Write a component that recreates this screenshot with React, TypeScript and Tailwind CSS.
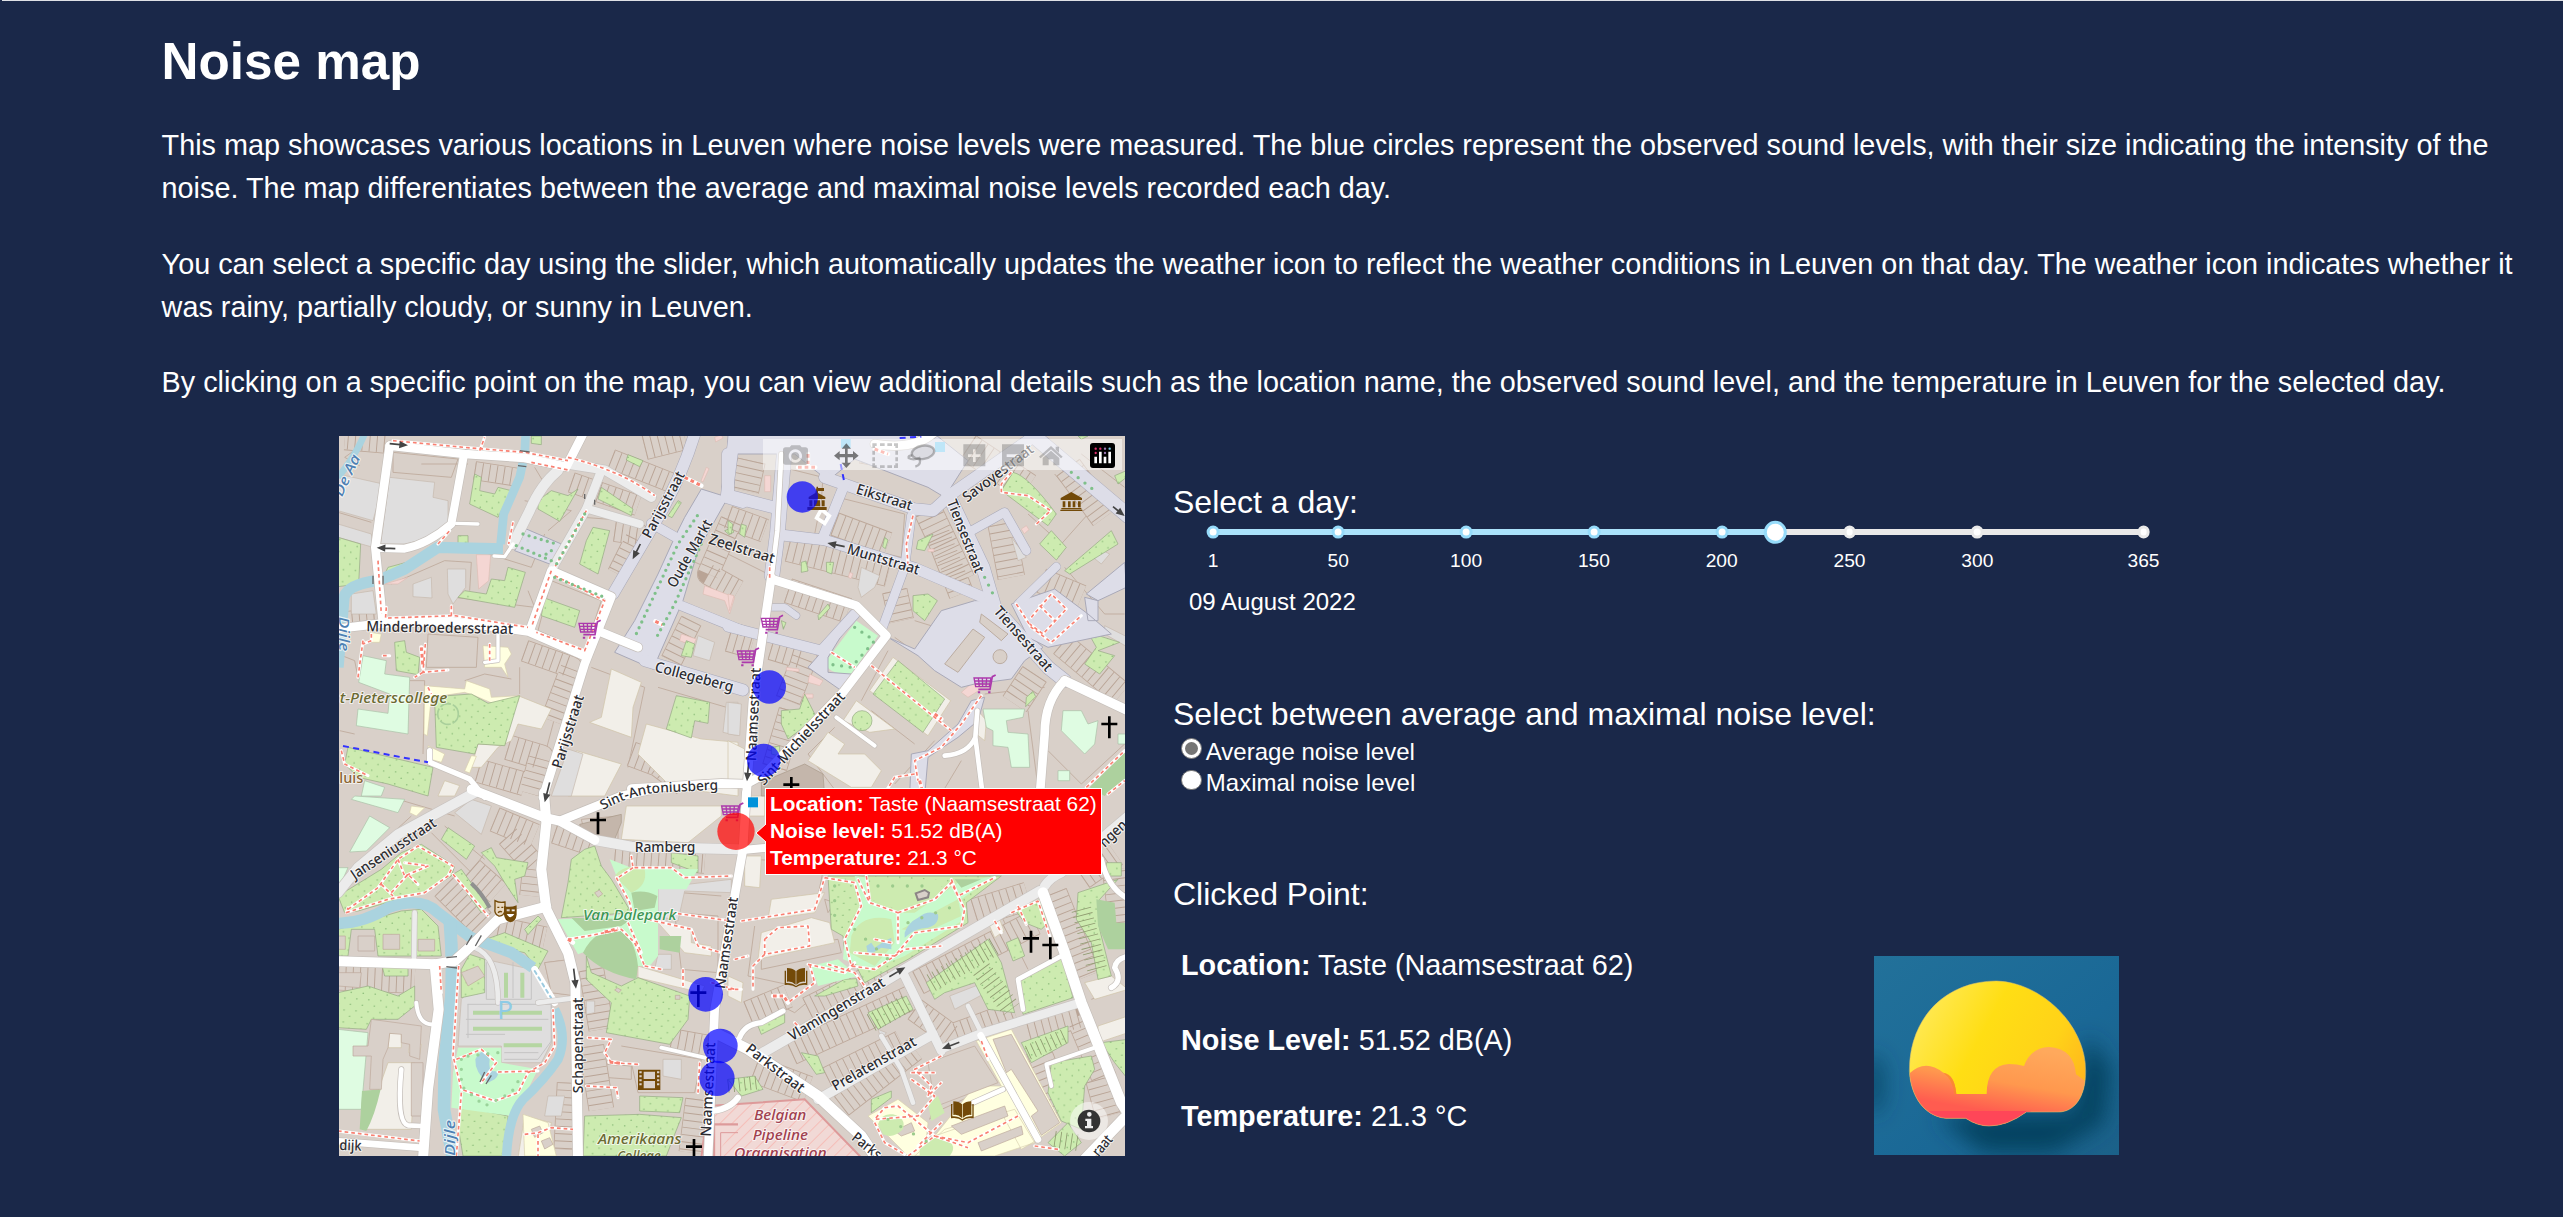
import React from "react";

type Quad = "A" | "B" | "C" | "D";
const OFFSET: Record<Quad, [number, number]> = { A: [-3, -6], B: [1167, -6], C: [-3, 1080], D: [1167, 1080] };
type Area = [Quad, string];
type Line = [Quad, number, string];

const at = (q: Quad) => `translate(${OFFSET[q][0]} ${OFFSET[q][1]})`;

const Areas = ({ items, fill, stroke = "none", sw = 2 }: { items: Area[]; fill: string; stroke?: string; sw?: number }) => (
  <g fill={fill} stroke={stroke} strokeWidth={sw}>
    {items.map(([q, d], i) => (
      <path key={i} d={d} transform={at(q)} />
    ))}
  </g>
);

const Lines = ({ items, color, grow = 0, dash, cap = "round" }: { items: Line[]; color: string; grow?: number; dash?: string; cap?: "round" | "butt" }) => (
  <g fill="none" stroke={color} strokeLinejoin="round" strokeLinecap={cap} strokeDasharray={dash}>
    {items.map(([q, w, d], i) => (
      <path key={i} d={d} strokeWidth={w + grow} transform={at(q)} />
    ))}
  </g>
);

const land: Area[] = [
  ["A", "M540 785 L640 825 L610 885 L540 870 L520 920 L480 940 L430 1000 L400 1000 L420 930 L500 935Z"],
  ["A", "M820 705 L910 745 L885 820 L880 910 L755 865 L790 850Z"],
  ["A", "M925 870 L1090 915 L1200 925 L1200 1086 L1000 1060 L900 960Z"],
  ["A", "M715 950 L850 990 L800 1086 L690 1086Z"],
  ["A", "M320 1040 L365 1055 L350 1086 L300 1086Z"],
  ["B", "M0 920 L50 945 L50 1040 L0 1040Z"],
  ["B", "M495 670 L668 800 L600 905 L425 770Z"],
  ["B", "M385 800 L500 885 L425 895 L345 860Z"],
  ["B", "M300 895 L350 930 L330 960 L410 960 L460 1010 L430 1060 L370 1060 L240 980Z"],
  ["B", "M750 830 L775 860 L770 920 L745 900Z"],
  ["C", "M865 30 L1150 30 L1150 60 L1050 140 L850 130Z"],
  ["C", "M150 800 L230 800 L220 1000 L80 1000Z"],
  ["C", "M155 712 L190 712 L190 755 L150 755Z M215 740 L250 745 L245 775 L212 770Z"],
  ["C", "M900 510 L1100 570 L1090 590 L900 545Z"],
  ["C", "M960 380 L1060 400 L1060 440 L1120 450 L1120 480 L1040 470Z"],
  ["C", "M560 960 L640 980 L620 1086 L540 1086Z"],
  ["D", "M50 180 L100 180 L95 275 L50 270Z"],
  ["D", "M130 310 L290 290 L260 350 L120 370Z"],
  ["D", "M100 410 L250 365 L305 380 L320 440 L90 490Z"],
  ["D", "M1070 560 L1150 540 L1200 580 L1100 610Z M1110 690 L1200 660 L1200 710 L1110 740Z"],
  ["D", "M60 0 H110 V60 H55Z"],
  ["D", "M0 540 L45 560 L40 620 L0 600Z M785 390 L815 370 L828 405 L800 425Z"],
];
const pale: Area[] = [
  ["A", "M155 130 L290 145 L285 190 L330 200 L330 265 Q270 320 200 330 L128 330Z"],
  ["A", "M0 120 L135 150 L105 260 L0 230Z"],
  ["A", "M0 270 L100 300 L105 340 L0 310Z"],
  ["A", "M40 480 L105 470 L115 540 L40 540Z"],
  ["A", "M225 450 L280 430 L282 492 L225 488Z M328 405 L383 405 L383 460 L345 510 L330 480Z"],
  ["A", "M1080 605 L1130 625 L1115 680 L1065 665Z M1165 805 L1200 805 L1200 905 L1155 895Z"],
  ["A", "M690 945 L735 960 L700 1086 L640 1086Z"],
  ["B", "M400 400 L455 425 L440 460 L400 490 L390 460Z M1105 340 L1145 360 L1120 390 L1095 370Z"],
  ["B", "M0 805 L40 810 L35 905 L0 900Z M850 310 L895 370 L870 380Z M1130 575 L1200 610 L1200 640 L1130 600Z"],
  ["C", "M350 50 L400 10 L460 30 L430 115Z"],
  ["C", "M370 610 L420 560 L440 490 L580 520 L640 600 L640 740 L610 800 L490 800 L490 750 L360 750Z"],
  ["C", "M960 275 L1180 250 L1180 290 L1040 285 L1020 375 L960 360Z M975 790 H1030 V850 L975 840Z M745 615 H770 V650 L745 655Z"],
  ["C", "M960 475 L1000 475 L1000 520 L950 520Z M630 900 L680 900 L670 960 L620 960Z"],
  ["D", "M665 600 L755 565 L765 595 L680 640Z M450 700 L475 710 L460 730Z"],
];
const pink: Area[] = [
  ["A", "M415 362 L458 362 L452 440 L422 465Z M1100 455 L1190 490 L1175 540 L1160 500 L1095 480Z M1030 600 L1075 615 L1065 635 L1025 620Z M335 520 h12 v22 h-12Z"],
  ["A", "M1130 10 l20 -8 l5 10 l-22 12Z M140 450 L210 430 L180 450Z M1105 100 l8 4 l-18 40 l-6 -3Z"],
  ["B", "M110 125 h18 v48 h-18Z M700 775 L740 740 L760 765 L720 790Z M245 720 L285 740 L275 755 L240 745Z M0 480 L18 485 L5 530Z M880 285 l15 -10 l8 12 l-14 12Z M690 525 l15 -10 l6 10 l-20 18Z M600 345 h18 v8 h-18Z M175 700 l38 5 v8 l-38 -4Z M225 780 h30 v12 h-30Z M365 415 l10 4 l-6 15 l-8 -4Z"],
];
const gardens: Area[] = [
  ["A", "M0 310 L68 330 L62 450 L0 458Z"],
  ["A", "M410 120 L430 130 L425 170 L470 180 L480 160 L520 170 L480 250 L395 210Z"],
  ["A", "M600 200 L640 170 L690 185 L720 165 L665 262 L600 225Z"],
  ["A", "M510 400 L562 415 L530 520 L360 490 L380 470 L445 480 L460 435 L500 440Z"],
  ["A", "M765 280 L815 290 L780 420 L725 390 L745 320Z"],
  ["A", "M620 492 L725 530 L710 580 L610 545Z"],
  ["A", "M870 62 L915 80 L905 98 L865 78Z M790 160 L885 225 L880 245 L780 195Z M580 6 H610 V32 L580 28Z"],
  ["A", "M170 625 L200 620 L205 655 L245 670 L240 722 L175 710Z"],
  ["A", "M330 785 L400 780 L450 808 L545 785 L500 935 L420 930 L410 960 L295 940 L290 800Z"],
  ["A", "M30 940 L285 1000 L270 1086 L150 1050 L60 1030 L20 990Z"],
  ["A", "M1015 785 L1115 805 L1110 868 L1070 860 L1060 912 L985 885Z"],
  ["A", "M1045 620 L1070 630 L1060 670 L1030 665Z M150 400 L205 385 L190 415 L140 420Z M360 305 h30 v25 h-30Z M1160 290 l20 -8 l8 12 l-15 8Z M1020 200 l10 6 l-28 45 l-12 -6Z"],
  ["B", "M855 115 Q900 125 985 240 L960 275 L880 215 L820 170Z"],
  ["B", "M970 290 L1015 340 L985 378 L935 330Z M1010 410 L1150 290 L1170 330 L1025 420Z M1160 125 L1195 110 L1195 130 L1170 150Z"],
  ["B", "M555 485 L600 480 L628 500 L590 560 L555 530Z M570 320 L615 300 L590 350 L565 345Z"],
  ["B", "M510 680 L650 795 L585 895 L435 780Z"],
  ["B", "M160 830 L215 825 L230 780 L265 850 L240 870 L180 915 L160 870Z M372 860 a30 30 0 1 0 60 0 a30 30 0 1 0 -60 0"],
  ["B", "M40 270 L55 275 L50 310 L35 300Z M220 385 l14 -4 l6 30 l-20 4Z M295 385 h22 l-6 35 l-15 -6Z M0 260 l14 10 l-4 30 l-10 -4Z M270 545 l30 -35 l6 12 l-34 36Z M470 310 l10 8 l-8 26 l-8 -6Z M160 560 l14 6 l-8 20Z M130 940 l25 -4 v30 l-25 -6Z"],
  ["B", "M1080 595 L1175 625 L1110 650 L1160 665 L1115 720 L1070 690 L1105 640Z M895 790 l20 -18 l8 16 l-30 30Z M1050 6 h30 l-20 10Z"],
  ["C", "M330 95 L410 150 L385 190 L310 130Z"],
  ["C", "M0 300 L130 220 L190 170 L250 145 L350 210 L340 240 L260 290 L180 310 L60 345 L20 350Z"],
  ["C", "M0 400 L190 345 L250 340 L300 390 L310 480 L120 480 L110 400 L40 400 L30 480 L0 480Z"],
  ["C", "M345 235 L370 220 L450 330 L430 350Z M430 170 L460 155 L475 185 L570 200 L560 240 L530 250 L540 320 L500 260 L470 210Z"],
  ["C", "M770 150 L790 210 L820 250 L880 350 L670 365 L690 260 L700 190 L740 160Z"],
  ["C", "M745 480 L760 530 L850 570 L900 545 L1055 600 L1050 670 L995 745 L805 710 L820 620 L745 550Z"],
  ["C", "M0 590 L90 570 L180 600 L230 570 L230 630 L180 670 L100 670 L85 700 L0 695Z"],
  ["C", "M415 440 L500 410 L630 465 L600 520 L560 470Z M395 475 L440 490 L440 590 L370 605 L370 520Z M560 400 l40 -40 l10 10 l-40 46Z"],
  ["C", "M905 900 L1035 905 L1025 950 L905 945Z M740 960 L905 955 L1030 965 L1010 1015 L985 1080 L735 1080Z"],
  ["C", "M365 930 L510 960 L500 1080 L375 1080 L360 990Z M130 500 L210 505 L210 540 L140 540Z M1000 170 L1080 180 V230 L1000 200Z"],
  ["D", "M300 240 L820 240 L715 320 L720 380 L540 490 L410 560 L380 500 L350 470 L345 420 L310 400Z"],
  ["D", "M870 560 L1000 480 L1035 605 L885 655Z M835 440 L870 425 L890 480 L855 495Z M860 340 L935 310 L960 380 L940 400 L890 380Z"],
  ["D", "M1050 290 L1170 250 L1115 310 L1115 400 L1150 540 L1110 550 L1090 440 L1045 370Z M1135 200 h45 v40 h-45Z"],
  ["D", "M595 560 L780 430 L820 500 L860 650 L780 640 L740 560 L650 590 L620 610Z"],
  ["D", "M420 650 L535 600 L555 640 L450 700Z M90 690 L170 655 L170 680 L100 715Z M220 770 L270 780 L290 830 L265 835Z"],
  ["D", "M880 740 L1020 690 L1020 740 L910 800Z M970 800 L1090 780 L1100 820 L1070 870 L1060 1000 L1000 975 L960 890Z M1120 740 L1200 730 V850 L1160 800Z"],
  ["D", "M430 910 L490 885 L490 905 L430 950Z M0 850 L80 840 L105 880 L40 900Z M0 940 L50 930 L50 950 L0 960Z M960 1040 L1020 980 L1060 1040 L1010 1080Z"],
  ["D", "M260 600 L350 550 L385 548 L390 570 L290 600Z"],
];
const mint: Area[] = [
  ["A", "M75 665 L145 680 L140 720 L215 730 L210 900 L55 875 L60 825 L150 838 L155 780 L62 745Z"],
  ["A", "M80 1040 L140 1060 L130 1086 L70 1086Z"],
  ["B", "M765 825 L890 825 L885 850 L835 860 L840 895 L900 900 L905 1000 L850 1000 L840 940 L795 935 L795 890 L775 880Z"],
  ["B", "M1005 830 L1060 830 L1080 870 L1110 860 L1100 930 L1070 960 L1000 890Z M990 1010 h35 v30 h-35Z M1170 900 h25 v30 h-25Z"],
  ["C", "M50 0 L200 10 L180 50 L40 10Z M95 60 L155 95 L85 165 L35 168Z M0 700 L90 710 L70 940 L0 940Z M0 215 L30 215 L10 260 L0 260Z"],
];
const parks: Area[] = [
  ["C", "M815 190 L880 215 L1080 220 L1045 280 L960 280 L960 480 L935 510 L890 510 L840 430 L720 475 L660 370 L780 365 L880 350Z"],
  ["C", "M360 755 L490 755 L490 800 L600 820 L560 900 L520 960 L340 935 L345 830Z"],
  ["D", "M380 240 L420 245 L420 310 L500 350 L560 350 L690 260 L800 240 L700 310 L710 370 L530 480 L430 520 L345 490 L350 420 L400 340Z"],
  ["D", "M250 510 L330 490 L390 540 L270 570Z"],
  ["B", "M385 560 L450 605 L370 720 Q290 720 295 680Z"],
];
const inPark: Area[] = [
  ["D", "M430 250 L660 250 L600 320 L520 345 L430 310Z M520 400 L690 310 L700 360 L590 410Z M370 420 Q400 350 490 370 L500 440 L440 510 L365 470Z"],
  ["C", "M830 240 Q860 200 920 220 Q930 270 880 290 Q850 260 830 240Z"],
];
const forest: Area[] = [
  ["C", "M735 470 Q770 400 840 400 Q890 420 900 510 L895 550 Q790 530 735 470Z M700 365 L880 370 L850 390 L740 405Z M880 290 Q920 280 958 300 L950 335 L890 345Z M965 420 L1030 420 L1025 470 L965 460Z M72 885 L128 880 Q110 960 85 1005 L65 1000Z"],
  ["D", "M1105 310 L1160 320 L1165 380 H1200 V460 H1140 L1110 390Z M680 250 h80 l-60 25Z"],
  ["B", "M1085 1060 L1195 950 L1195 1030 L1130 1086Z"],
];
const yellow: Area[] = [
  ["A", "M260 755 L380 765 L385 740 L455 765 L460 790 L545 785 L540 805 L480 815 L410 785 L380 775 L280 790 L268 905 L258 900Z M435 635 L510 640 L520 660 L500 690 L510 730 L490 700 L440 700Z M270 935 L320 960 L310 985 L275 975Z M400 965 l15 2 l-20 50 l-15 -6Z M95 595 L130 600 L125 625 L100 625Z"],
  ["C", "M555 955 L630 980 L640 1020 L655 1080 L560 1080Z M220 30 L260 35 L235 60 L215 50Z"],
  ["D", "M745 735 L850 700 L1000 980 L930 1030 L880 1060 L820 950 L620 1020 L740 870 L820 870Z M420 960 L510 910 L600 980 L590 1080 L540 1080Z M650 1000 L860 940 L920 1040 L800 1080 L560 1080Z"],
];
const yellowBuildings: Area[] = [
  ["D", "M600 800 L740 750 L810 860 L640 925 L605 970 L620 920Z M670 990 L830 930 L840 960 L700 1015Z M750 1040 L880 990 L885 1015 L760 1065Z M795 730 L850 715 L995 980 L940 1018 L910 960 L930 945 L850 820 L835 830Z M500 1005 L550 980 L560 1005 L520 1020Z"],
];
const shrubs: Area[] = [
  ["D", "M450 985 q10 -35 45 -30 q40 10 30 45 q-30 30 -60 15Z M575 1060 q25 -50 80 -30 q35 20 10 50 h-90Z M600 920 l30 -20 l20 50 l-40 25Z"],
];
const water: Line[] = [
  ["A", 26, "M563 0 L560 60 L545 130 L497 240 L488 330"],
  ["A", 34, "M495 345 L300 340 L200 405 L120 440 Q30 450 18 490 L0 700"],
  ["A", 20, "M80 0 Q50 70 0 130"],
  ["C", 34, "M0 382 Q80 380 150 335 Q250 300 300 350 L400 425 L520 470 L585 515"],
  ["C", 38, "M335 370 Q345 480 340 600 L320 800 L318 940 L345 1090"],
  ["C", 28, "M650 640 Q690 720 660 790 Q620 850 555 910 Q510 960 505 1090"],
];
const ponds: Area[] = [
  ["C", "M412 790 Q435 745 455 790 Q450 830 470 825 Q490 830 470 850 L450 860 Q410 830 412 790Z"],
  ["D", "M530 410 Q540 380 570 365 Q600 340 630 355 Q635 385 600 395 Q560 395 530 425Z M415 450 L430 440 L440 455 L470 435 L490 425 L490 460 L460 455 L435 470 L420 475Z"],
];
const squares: Area[] = [
  ["A", "M1090 165 L1170 190 L1080 350 L1035 500 L945 705 L830 655 L890 560 L960 420 L1010 310 L1040 250Z"],
  ["A", "M565 285 L670 330 L640 392 L530 350Z"],
  ["B", "M0 0 L620 0 L720 80 L650 190 L600 160 L380 75 L300 140 L200 60 L0 60Z"],
  ["B", "M640 530 L740 500 L790 500 L945 640 L890 680 L850 735 L740 750 L700 760 L620 710 L570 665 L480 610 L560 645Z"],
  ["B", "M850 510 L980 465 L1080 540 L1150 600 L960 640 L900 610Z M1075 480 L1190 385 L1195 460 L1110 500Z M1070 490 L1110 500 L1110 560 L1080 560Z"],
  ["B", "M240 700 L380 540 L300 670 L300 715 L370 720 L340 770Z"],
  ["B", "M770 790 L750 860 L690 910 L600 970 L590 1086 L545 1086 L550 960 L600 950 L690 870 L730 800Z"],
];
const pedestrian: Line[] = [
  ["A", 34, "M1070 0 Q1030 130 960 250 L825 480"],
  ["A", 34, "M1190 0 L1165 190 L1215 205"],
  ["A", 28, "M1030 515 L1215 590"],
  ["A", 28, "M940 268 L1010 308"],
  ["A", 34, "M920 680 L1215 768"],
  ["B", 36, "M0 60 L0 185 L145 222"],
  ["B", 44, "M170 40 L148 300 L132 425"],
  ["B", 32, "M150 302 L290 318 L560 402 L770 492"],
  ["B", 34, "M290 130 L560 225 L615 230 L670 180 L900 20"],
  ["B", 30, "M350 150 L285 310"],
  ["B", 40, "M660 180 L765 400 L800 520 L960 700 L1010 740"],
  ["B", 26, "M550 245 L530 400 L460 590"],
  ["B", 26, "M735 288 L830 235 L895 350"],
  ["B", 24, "M870 510 L985 398"],
  ["B", 30, "M0 578 L280 650 L380 540"],
  ["B", 20, "M130 520 L170 520 L205 545"],
  ["B", 44, "M910 0 L1200 245"],
];
const grey: Line[] = [
  ["A", 30, "M660 110 Q610 150 575 230 L525 330"],
  ["A", 26, "M645 400 L745 225 L790 110"],
  ["A", 24, "M750 225 L905 270"],
  ["A", 28, "M700 92 L800 108 L940 190"],
  ["C", 30, "M0 290 L60 215 L180 115 L410 -10"],
  ["C", 30, "M770 132 L880 152 L1200 160"],
  ["C", 14, "M230 350 L228 490"],
  ["C", 14, "M410 455 Q480 480 480 620 M600 620 L720 605"],
  ["D", 30, "M105 770 L330 640 L530 520 L935 285"],
  ["D", 28, "M950 270 Q965 245 1000 230 L1200 60"],
  ["D", 26, "M525 530 L640 765"],
  ["D", 26, "M650 755 L760 712 L1050 622"],
  ["D", 28, "M615 715 L270 910"],
  ["D", 14, "M460 720 L520 820 L555 920 M720 630 L755 700"],
];
const white: Line[] = [
  ["A", 26, "M155 35 L112 340 L135 570"],
  ["A", 26, "M155 35 L380 60 L560 72 L685 98 L740 -10"],
  ["A", 24, "M378 62 L340 270 Q270 330 200 344 L118 342"],
  ["A", 26, "M-10 585 L135 568 L340 562 L570 592 L745 668"],
  ["A", 26, "M575 590 L640 410 L820 488 L740 690 L615 1090"],
  ["A", 26, "M790 595 L900 640"],
  ["A", 10, "M480 600 L480 680 L440 685 M355 268 L420 270 M525 330 L500 368 L468 366"],
  ["A", 16, "M275 950 L275 985 L395 1035 L440 1090"],
  ["B", 26, "M130 430 L75 800 L55 1090"],
  ["B", 14, "M160 60 L148 290 L132 420"],
  ["B", 26, "M130 435 L385 515 L475 605 L345 775 L110 1020 L55 1050 L-20 1048 L-290 1064"],
  ["B", 26, "M440 30 Q560 50 620 -6"],
  ["B", 28, "M1010 740 L1200 830"],
  ["B", 26, "M1010 740 Q950 800 950 900 L935 1090"],
  ["B", 14, "M748 830 L742 910 L765 1090 M742 910 Q720 960 650 965"],
  ["B", 12, "M325 850 L440 935"],
  ["C", 28, "M400 -20 L620 65 L665 75 L770 132"],
  ["C", 30, "M618 -10 L625 80 L610 220 L625 340 L690 470 L712 560 L720 1090"],
  ["C", 26, "M665 75 L850 0 L960 -24"],
  ["C", 30, "M625 332 L480 370 L410 440 L350 495 L290 505 L-10 495"],
  ["C", 30, "M290 505 L302 640 L270 880 L255 1090"],
  ["C", 12, "M235 620 Q240 690 290 685 M970 755 L1100 785"],
  ["C", 14, "M190 820 Q175 980 210 988 L250 990"],
  ["C", 20, "M-10 1035 L245 1055"],
  ["C", 18, "M1110 945 Q1170 945 1200 905"],
  ["D", 26, "M55 -10 L45 160 L20 300 L-40 640 L-60 1090"],
  ["D", 24, "M45 162 L120 155"],
  ["D", 32, "M-30 715 L60 760 L270 900 L400 1020 L450 1095"],
  ["D", 32, "M945 290 L1010 470 L1060 620 L1180 920 L1205 960"],
  ["D", 32, "M1190 965 L1070 1090"],
  ["D", 20, "M758 718 L930 1030"],
  ["D", 14, "M1000 480 L870 550 L885 640 M825 880 L735 920"],
  ["D", 12, "M970 870 L955 805 L1100 755"],
  ["D", 16, "M1120 190 Q1140 280 1205 310 M1150 575 Q1185 555 1160 515 Q1165 485 1205 480"],
  ["D", 16, "M35 725 Q50 685 100 680 L165 645"],
];
const terraces: Line[] = [
  ["A", 46, "M700 145 L900 215"], ["A", 44, "M820 75 L1010 150"], ["A", 60, "M920 40 L1040 10"], ["A", 50, "M830 290 L900 300 L840 420"],
  ["A", 50, "M1180 260 L1110 420 L1200 470"], ["A", 50, "M1060 560 L1000 680"], ["A", 50, "M560 650 L700 700 L640 860"], ["A", 56, "M420 1010 L560 1050"], ["A", 60, "M510 940 L610 970 L580 1080"], ["A", 60, "M880 960 L960 990 L1040 1050"], ["A", 40, "M410 110 L540 130"], ["A", 40, "M20 560 L110 552"], ["A", 40, "M140 30 L20 20"],
  ["B", 70, "M70 80 L50 170"], ["B", 60, "M180 345 L480 420"], ["B", 56, "M320 270 L480 330"], ["B", 70, "M600 230 L700 440"], ["B", 60, "M560 80 L400 50"], ["B", 60, "M630 300 L700 480"], ["B", 66, "M820 270 L850 430"], ["B", 70, "M720 40 L900 160"], ["B", 60, "M180 470 L360 530"], ["B", 60, "M500 470 L520 560"], ["B", 60, "M130 640 L230 670 L180 800"], ["B", 60, "M190 830 L140 1000"], ["B", 60, "M1000 630 L1180 780"], ["B", 70, "M920 720 L860 810"], ["B", 70, "M1020 100 L1130 250"], ["B", 60, "M940 440 L1060 490"], ["B", 56, "M0 250 L110 290"], ["B", 50, "M0 620 L70 640"],
  ["C", 60, "M470 70 L590 120"], ["C", 56, "M510 120 L590 210 L580 300"], ["C", 50, "M650 110 L770 150"], ["C", 50, "M830 180 L1100 200"], ["C", 60, "M400 220 L480 290"], ["C", 60, "M480 400 L620 430"], ["C", 60, "M0 545 L230 555"], ["C", 70, "M320 270 L430 380"], ["C", 60, "M760 520 L790 700"], ["C", 50, "M1000 730 L1110 750"], ["C", 50, "M690 860 L680 1060"], ["C", 60, "M1080 910 L1060 1070"], ["C", 60, "M760 750 L790 940"],
  ["D", 70, "M740 350 L900 300"], ["D", 60, "M570 560 L920 380"], ["D", 56, "M560 640 L670 720 L860 650"], ["D", 60, "M240 640 L480 520"], ["D", 60, "M190 770 L560 600"], ["D", 66, "M80 820 L240 880"], ["D", 56, "M340 930 L560 760"], ["D", 60, "M980 290 L1080 540"], ["D", 60, "M900 700 L1050 660 L1130 850"], ["D", 60, "M1180 380 L1160 220"], ["D", 60, "M930 760 L1010 960"], ["D", 60, "M1110 850 L1140 960"], ["D", 56, "M60 650 L180 600"], ["D", 60, "M300 850 L520 740"], ["D", 70, "M1060 240 L1160 170"],
];
const outlines: Area[] = [
  ["A", "M165 55 L360 75 L340 130 L165 115Z M0 235 L100 265 M65 95 L20 70 L90 20 M160 450 L320 380 L400 385 L395 470 M420 350 L580 400 L620 300 M570 470 L590 520 L350 490 M270 600 L420 610 L415 700 L265 700Z M0 660 L50 680 L60 730 M545 700 L545 780 M50 900 L5 890 M215 740 L260 740 L255 960 M380 740 L440 720 L520 735 M640 440 L790 500 L740 650 L600 590Z M735 250 L870 260 M690 700 L600 1040 M760 700 L920 760 L870 1000 M1060 380 L1200 440 M960 760 L1200 830 M630 290 L700 230 L560 200 M250 90 L390 90 M590 100 L620 150"],
  ["B", "M165 100 L285 130 L280 200 L260 300 L160 290Z M330 190 L530 240 L520 370 L310 320Z M560 560 L625 580 L570 660 L500 610 M480 650 L400 800 M620 920 L500 1050 M900 240 L1000 330 L1080 240 L980 120 M1060 60 L1190 160 M950 760 L770 780 M1010 400 L1130 540 L1190 540 M960 950 L1060 1050 L1190 930 M560 930 L430 830 M320 880 L240 960 L330 1080 M0 360 L120 420 L80 700 M700 980 L640 1080 M900 830 L930 1060"],
  ["C", "M180 10 L350 60 M100 170 L220 60 M320 90 L440 190 M280 110 L400 230 L440 170 M370 530 L420 510 L440 540 L390 570Z M620 500 L700 490 L720 600 L640 590Z M1030 290 L1150 300 M1010 350 L1140 360 L1140 530 L1030 520Z M745 800 L880 810 L880 850 L745 840 M850 750 L1090 790 L1070 890 L900 890 L880 800 M730 70 L840 60 L840 130 L740 110Z M700 650 L790 650 L810 700"],
  ["D", "M65 190 L290 200 L270 300 M80 390 L60 540 L200 570 M100 460 L330 430 L340 470 L100 520Z M610 920 L740 870 L750 890 L620 950Z M1090 610 L1200 570 M290 310 L320 320 L300 350Z M290 680 L340 740 L430 690 M120 610 L200 650 L260 600 M820 360 L900 520"],
];
const smallBuildings: Area[] = [
  ["C", "M60 420 h50 v45 h-50Z M135 415 h50 v45 h-50Z M240 430 h50 v35 h-50Z M370 530 L420 510 L440 540 L390 570Z M770 290 l14 -8 l10 12 l-14 10Z M580 1000 l25 -10 l10 20 l-25 14Z M610 1035 l25 -10 l10 20 l-25 14Z M620 500 L700 490 L715 600 L640 590Z M830 582 l8 -6 l12 6 l-8 8Z M1012 598 h14 v12 h-14Z M0 420 h22 v40 h-22Z M0 530 L70 530 L65 575 L0 570Z"],
  ["C", "M100 670 L250 690 L245 790 L215 780 L215 745 L190 740 L190 715 L155 712 L150 755 L135 790 L130 880 L95 880 L100 780 L45 780 L45 750 L90 750Z M220 800 h35 v160 h-35Z"],
  ["B", "M155 1070 h1 v1 h-1Z"],
];
const paths: Line[] = [
  ["A", 5, "M165 20 L400 42 L560 55 L690 80 M580 85 L690 108 M690 70 Q850 110 950 185 M425 50 L440 10"],
  ["A", 5, "M120 380 L130 540 M145 520 L142 560 M150 552 L350 545 L570 580 M640 410 L580 580 M650 425 L800 500 L740 650 L595 595 M300 330 L335 290"],
  ["A", 5, "M75 620 L60 730 M100 600 L100 620 L75 630 M262 630 L255 715 L330 708 M255 715 L230 730 M135 665 h20 M455 630 v50 M270 760 l10 20 M10 950 L20 990 L90 1025 M525 265 L512 330 M340 515 v30 M745 230 L690 330 L650 400"],
  ["A", 9, "M1040 130 L1090 155 M952 562 l22 10 M250 640 L255 700"],
  ["B", 5, "M555 245 L535 330 L540 390 M310 655 L380 700 M430 695 L620 850 L670 890 M850 115 L820 150 L820 175 L900 185 L968 230 L925 270"],
  ["B", 5, "M865 510 L910 580 L970 625 L1060 545 M910 550 L970 480 L1015 525 L945 600 L905 570 M935 515 L980 560 M760 785 L700 870 L640 940 L560 980 L570 1040 M560 1020 L500 1030 L475 1070 M125 400 v40 M1075 1060 L1190 950 M1140 1080 L1190 1040"],
  ["B", 9, "M440 45 L480 60 M210 100 L262 100 M240 60 v30 M620 840 l20 15 M575 1040 L585 1080"],
  ["C", 5, "M30 340 L120 275 L180 190 L240 150 L345 210 L330 240 L260 290 L150 310 L25 350 L30 335 M130 265 L165 300 M180 190 L200 240 L270 210 L200 200 M160 290 L210 235 L240 265 M345 235 L450 360"],
  ["C", 5, "M880 180 L885 215 L1000 215 L1040 245 L1180 240 M835 245 L875 320 L880 345 M885 215 L840 245 M690 430 L750 420 L850 400 L890 440 L920 510 M870 380 L910 470 M930 370 L1060 400 L1080 450 L1150 470 M1000 350 L1180 375 M920 510 L970 520"],
  ["C", 5, "M305 510 L310 590 M362 510 L345 780 L370 880 L470 915 L540 890 L570 830 L620 800 L650 750 L645 640 M355 790 L430 760 L475 800 L430 860 M480 828 L600 825 M370 890 L355 1080"],
  ["C", 5, "M0 1005 L245 1035 M560 1015 L600 1010 L640 995 L705 1000 M600 1015 V1080 M750 725 L820 730 L800 770 L820 800 L900 805 M745 870 L835 875 L840 905 M1085 800 L1080 890 M1120 560 L1190 580 M1035 520 V570 M265 110 L275 95"],
  ["C", 9, "M690 430 L705 440 M800 408 L840 398 M815 798 L850 802"],
  ["D", 5, "M40 375 L260 340 L290 245 M290 245 L380 260 L400 330 L350 430 L370 510 L440 520 L530 460 L640 450 M390 250 L425 320 L510 350 L510 440 M510 350 L620 310 L670 260 L710 340 L700 390 L560 410 L500 480 L380 470 M670 250 L690 300 L800 245 M415 240 L425 310 M440 430 L490 440"],
  ["D", 5, "M20 490 L60 480 M110 430 L150 395 L240 390 L245 450 L110 475Z M110 475 L75 510 L75 580 M245 505 L260 560 L180 620 M240 505 L350 530 L380 500 M300 505 L380 530 L410 570 M0 580 H40 M200 680 l10 10"],
  ["D", 5, "M850 350 L930 315 L965 420 M870 330 L895 385 M800 375 L820 410 M640 780 L560 820 L610 870 L600 900 L640 860 M550 830 L620 830 M550 850 L620 900 L570 960 L440 970 L470 935 L510 930 L620 1020 L720 1055 M760 735 L780 790 M870 960 L720 1040 L620 1020 L540 1080 M920 1050 L990 1060 M440 980 L470 1040 L530 1075 M640 980 L570 1050"],
  ["D", 9, "M135 600 L165 600 M170 605 L180 620"],
];
const house: Line[] = [
  ["D", 60, "M1060 340 L1110 530"], ["D", 56, "M610 560 L800 450"], ["D", 60, "M760 520 L850 640"], ["D", 56, "M430 680 L540 620"], ["D", 44, "M900 770 L1010 720"], ["D", 40, "M0 870 L90 860"], ["D", 50, "M980 1030 L1050 1040"],
];

const DARK = "#2c2c31";
type Label = [Quad, number, number, number, number, string, string?, boolean?];
const labels: Label[] = [
  ["A", 85, 592, 525, 600, "Minderbroedersstraat"],
  ["A", 937, 316, 1042, 122, "Parijsstraat"],
  ["A", 1012, 464, 1124, 267, "Oude Markt"],
  ["A", 1110, 328, 1305, 388, "Zeelstraat"],
  ["A", 948, 712, 1182, 774, "Collegeberg"],
  ["A", 670, 1006, 738, 788, "Parijsstraat"],
  ["A", 5, 808, 328, 808, "t-Pieterscollege", "#6b6a32", true],
  ["A", 4, 1048, 76, 1048, "luis", "#8a6534"],
  ["A", 12, 190, 68, 70, "De Aa", "#4d80b3", true],
  ["A", 4, 548, 4, 652, "Dijle", "#4d80b3", true],
  ["B", 382, 178, 548, 230, "Eikstraat"],
  ["B", 718, 206, 920, 52, "Savoyestraat"],
  ["B", 656, 204, 742, 420, "Tiensestraat"],
  ["B", 355, 358, 570, 422, "Muntstraat"],
  ["B", 795, 533, 955, 715, "Tiensestraat"],
  ["B", 84, 982, 98, 702, "Naamsestraat"],
  ["B", 108, 1056, 353, 790, "Sint-Michielsstraat"],
  ["C", 50, 252, 298, 88, "Janseniusstraat"],
  ["C", 890, 168, 1072, 168, "Ramberg"],
  ["C", 735, 372, 1015, 372, "Van Dalepark", "#3c9655", true],
  ["C", 1160, 580, 1200, 305, "Naamsestraat"],
  ["C", 736, 892, 736, 605, "Schapenstraat"],
  ["C", 1118, 1022, 1132, 740, "Naamsestraat"],
  ["C", 780, 1044, 1030, 1044, "Amerikaans", "#6b6a32", true],
  ["C", 838, 1096, 968, 1096, "College", "#6b6a32", true],
  ["C", 352, 1080, 352, 972, "Dijle", "#4d80b3", true],
  ["C", 4, 1062, 70, 1064, "dijk"],
  ["D", 192, 736, 474, 568, "Vlamingenstraat"],
  ["D", 322, 886, 568, 746, "Prelatenstraat"],
  ["D", 50, 764, 216, 892, "Parkstraat"],
  ["D", 368, 1030, 446, 1092, "Parks"],
  ["D", 1112, 1084, 1156, 1032, "raat"],
  ["D", 1130, 156, 1200, 90, "ngen"],
  ["D", 78, 973, 235, 973, "Belgian", "#a0404f", true],
  ["D", 74, 1031, 240, 1031, "Pipeline", "#a0404f", true],
  ["D", 18, 1087, 296, 1087, "Organisation", "#a0404f", true],
];

const MapLabel = ({ label: [q, x1, y1, x2, y2, text, color = DARK, italic] }: { label: Label }) => {
  const length = Math.hypot(x2 - x1, y2 - y1);
  const angle = (Math.atan2(y2 - y1, x2 - x1) * 180) / Math.PI;
  return (
    <text
      transform={`${at(q)} translate(${x1} ${y1}) rotate(${angle})`}
      textLength={length}
      lengthAdjust="spacingAndGlyphs"
      fill={color}
      fontStyle={italic ? "italic" : "normal"}
    >
      {text}
    </text>
  );
};

const Cart = ({ q, x, y }: { q: Quad; x: number; y: number }) => (
  <g transform={`${at(q)} translate(${x} ${y})`} fill="none" stroke="#ac39ac" strokeWidth="4">
    <path d="M1 10 H52 L47 36 H6Z M14 10 L17 36 M26 10 L27 36 M39 10 L37 36 M3 19 H50 M5 28 H48" />
    <path d="M66 1 L56 6 L49 44 H14" strokeWidth="5" />
    <path d="M16 50 v6 M47 50 v6" strokeWidth="7" />
  </g>
);
const Cross = ({ q, x, y }: { q: Quad; x: number; y: number }) => (
  <path transform={`${at(q)} translate(${x} ${y})`} d="M0 -33 V33 M-24 -10 H24" stroke="#000" strokeWidth="8" fill="none" />
);
const Book = ({ q, x, y }: { q: Quad; x: number; y: number }) => (
  <g transform={`${at(q)} translate(${x} ${y})`} fill="#734a08">
    <path d="M7 0 Q24 0 33 9 V50 Q20 38 7 41Z M61 0 Q44 0 35 9 V50 Q48 38 61 41Z" />
    <path d="M0 8 H4 V45 Q22 44 34 54 Q46 44 64 45 V8 H68 V51 Q46 48 34 58 Q22 48 0 51Z" />
  </g>
);
const Arrow = ({ q, x1, y1, x2, y2 }: { q: Quad; x1: number; y1: number; x2: number; y2: number }) => {
  const l = Math.hypot(x2 - x1, y2 - y1);
  return (
    <g transform={`${at(q)} translate(${x1} ${y1}) rotate(${(Math.atan2(y2 - y1, x2 - x1) * 180) / Math.PI})`} fill="#444">
      <path d={`M0 -2.5 H${l - 24} V2.5 H0Z M${l - 26} -11 L${l} 0 L${l - 26} 11Z`} />
    </g>
  );
};

const points: [Quad, number, number, number][] = [
  ["B", 223, 189, 47],
  ["B", 124, 759, 50],
  ["B", 107, 979, 50],
  ["C", 1103, 595, 52],
  ["C", 1147, 750, 52],
  ["C", 1137, 847, 53],
];

const Modebar = () => (
  <g transform={at("B")}>
    <rect x="105" y="15" width="1077" height="93" fill="#fff" fillOpacity=".5" />
    <g fill="#444" fillOpacity=".3">
      <path fillRule="evenodd" d="M165 48 q0 -8 8 -8 h12 l5 -6 h26 l5 6 h11 q8 0 8 8 v36 q0 8 -8 8 h-59 q-8 0 -8 -8Z M202 46 a20 20 0 1 0 .1 0Z M202 54 a12 12 0 1 1 -.1 0Z" />
      <path d="M433 28 h13 v8 h-5 v6 h-8Z M456 28 h14 v8 h-14Z M478 28 h14 v8 h-14Z M498 28 h12 v14 h-8 v-6 h-4Z M433 50 h8 v12 h-8Z M433 70 h8 v12 h-8Z M502 50 h8 v12 h-8Z M502 70 h8 v12 h-8Z M433 88 h8 v6 h5 v8 h-13Z M456 94 h14 v8 h-14Z M478 94 h14 v8 h-14Z M502 88 h8 v14 h-12 v-8 h4Z" />
      <path fillRule="evenodd" d="M706 31 h66 v66 h-66Z M735 46 v15 h-15 v8 h15 v15 h8 v-15 h15 v-8 h-15 v-15Z" />
      <path fillRule="evenodd" d="M822 31 h66 v66 h-66Z M836 61 v8 h38 v-8Z" />
      <path d="M969 36 L1004 68 L999 73 L969 46 L938 73 L933 68Z M944 72 L969 50 L994 72 V94 H976 V76 H962 V94 H944Z M983 38 h10 v18 l-10 -9Z" />
    </g>
    <g fill="#444" fillOpacity=".1" stroke="#444" strokeOpacity=".35" strokeWidth="7">
      <ellipse cx="585" cy="55" rx="34" ry="20" transform="rotate(-10 585 55)" />
      <path fill="none" d="M553 64 Q540 64 542 72 Q556 80 574 72 Q582 92 562 98" />
    </g>
    <g fill="#444" fillOpacity=".7">
      <path d="M355 28 l14 16 h-10 v16 h16 v-9 l17 14 l-17 14 v-9 h-16 v16 h10 l-14 16 l-14 -16 h10 v-16 h-16 v9 l-17 -14 l17 -14 v9 h16 v-16 h-10Z" />
    </g>
    <rect x="1086" y="27" width="75" height="75" rx="9" fill="#000" />
    <g fill="#fff">
      <path d="M1099 68 h8 v20 h-8Z M1113 53 h8 v35 h-8Z M1127 68 h8 v20 h-8Z M1141 53 h8 v35 h-8Z" />
      <g fill="#e0306f"><circle cx="1103" cy="44" r="3.5" /><circle cx="1103" cy="57" r="3.5" /><circle cx="1117" cy="44" r="3.5" /></g>
      <g fill="#9e7bb5"><circle cx="1131" cy="44" r="3.5" /><circle cx="1131" cy="57" r="3.5" /></g>
      <circle cx="1145" cy="44" r="3.5" fill="#79cdea" />
    </g>
  </g>
);

const StreetMap = () => (
  <svg viewBox="0 0 2358 2160" className="block h-[720px] w-[786px]">
    <defs>
      <pattern id="plants" width="36" height="36" patternUnits="userSpaceOnUse" patternTransform="rotate(4)">
        <rect width="36" height="36" fill="#cdebb0" />
        <circle cx="9" cy="9" r="2.4" fill="#8fbf7c" />
        <circle cx="27" cy="27" r="2.4" fill="#8fbf7c" />
      </pattern>
      <pattern id="pinkHatch" width="26" height="26" patternUnits="userSpaceOnUse" patternTransform="rotate(45)">
        <rect width="26" height="26" fill="#f1d9d6" />
        <rect width="3" height="26" fill="#f5bdb8" />
      </pattern>
    </defs>
    <rect width="2358" height="2160" fill="#d9d0c9" />
    <Areas items={outlines} fill="none" stroke="#bda89a" sw={2.5} />
    <Lines items={terraces} color="#bda89a" grow={17} cap="butt" />
    <Lines items={terraces} color="#d9d0c9" grow={12} cap="butt" />
    <Lines items={terraces} color="#b9a496" grow={12} dash="2.8 19" cap="butt" />
    <Areas items={land} fill="#f2efe9" stroke="#cfc3a6" />
    <Areas items={pale} fill="#dfdede" stroke="#c6b8ac" />
    <Areas items={pink} fill="#f4d6d3" stroke="#dcbcb4" />
    <Areas items={yellow} fill="#ffffe0" stroke="#d8cfae" />
    <Areas items={mint} fill="#dffce2" stroke="#a9bfa6" />
    <Areas items={gardens} fill="url(#plants)" stroke="#93a880" sw={2} />
    <Areas items={parks} fill="#c8facc" />
    <Areas items={inPark} fill="#cdebb0" />
    <Areas items={forest} fill="#add19e" />
    <Areas items={yellowBuildings} fill="#d9d0c9" stroke="#bda89a" />
    <Areas items={shrubs} fill="#cdebb0" />
    <Areas items={smallBuildings} fill="#d9d0c9" stroke="#bda89a" />
    <Lines items={house} color="#8f9b70" dash="2.5 14" cap="butt" />
    <g transform={at("D")}>
      <path d="M-60 930 L230 910 L400 1085 L-80 1085Z" fill="url(#pinkHatch)" stroke="#dd9a9a" strokeWidth="6" />
    </g>
    <g transform={at("C")}>
      <path d="M1128 1085 V985 H1200" fill="#f1d9d6" stroke="#dd9a9a" strokeWidth="7" />
      <path d="M1148 1085 V1010 H1200" fill="none" stroke="#dd9a9a" strokeWidth="3" />
      <path d="M725 85 L850 55 L850 80 L830 130 L730 115Z" fill="#c4b6ab" stroke="#a89888" strokeWidth="2" />
    </g>
    <path transform={at("B")} d="M100 1045 L230 990 L285 1020 L290 1086 L100 1086Z" fill="#c4b6ab" stroke="#a89888" strokeWidth="2" />
    <Lines items={water} color="#aad3df" cap="butt" />
    <Areas items={ponds} fill="#aad3df" />
    <Lines items={pedestrian} color="#a9a9b8" grow={3} />
    <Areas items={squares} fill="#dddde8" stroke="#a9a9b8" sw={3} />
    <Lines items={pedestrian} color="#dddde8" />
    <g transform={at("B")} fill="#d9d0c9" stroke="#b5a396" strokeWidth="2.5">
      <path d="M735 585 L770 610 L690 715 L650 690Z M760 540 L840 600 L820 620 L755 565Z" />
      <circle cx="816" cy="668" r="21" />
    </g>
    <g transform={at("C")} fill="none" strokeLinecap="round">
      <g stroke="#c4c3c3" strokeWidth="3">
        <path d="M390 625 H640 V735 L600 790 H500 M385 670 H630 M385 715 H500 M500 770 H600 M445 500 V610 H580 V520 M525 500 V605 M390 625 V725" />
      </g>
      <g stroke="#b5d6a2" strokeWidth="12" strokeLinecap="butt">
        <path d="M405 650 H612 M405 698 H612 M497 748 H612 M504 530 V605 M553 530 V605" />
      </g>
      <path d="M590 520 L650 620" stroke="#fff" strokeWidth="20" />
      <path d="M400 262 Q430 290 455 335" stroke="#909090" strokeWidth="12" strokeLinecap="butt" />
      <path d="M590 525 L645 615" stroke="#9dcbe0" strokeWidth="6" strokeDasharray="10 12" />
    </g>
    <g transform={at("D")} fill="none" stroke="#8c8585" strokeWidth="6">
      <path d="M563 292 L590 282 L603 290 L600 304 L570 312Z" fill="#d9d0c9" />
    </g>
    <Lines items={grey} color="#c9c4c1" grow={4} />
    <Lines items={white} color="#c5bfba" grow={4} />
    <Lines items={grey} color="#ececec" />
    <Lines items={white} color="#fff" />
    <Lines items={paths} color="#fff" grow={4} />
    <Lines items={paths} color="#f98072" dash="11 9" cap="butt" />
    <g fill="none" stroke="#7fc08a" strokeWidth="10" strokeLinecap="round" strokeDasharray="0 19">
      <path transform={at("A")} d="M1078 245 L1020 330 L890 610 M1090 330 L1010 510 L950 620 M740 240 L650 400 M555 300 L655 330 M535 335 L640 380 M650 430 L800 490 M640 350 L610 370" />
      <path transform={at("B")} d="M380 580 L440 620 L370 700 L300 690 M770 430 L795 480 M1030 115 L1100 170" strokeDasharray="0 26" />
      <path transform={at("C")} d="M370 790 L370 870 L440 930 L520 890 L550 840 M390 780 L480 770" strokeDasharray="0 30" stroke="#9ad39a" />
      <path transform={at("D")} d="M320 270 V400 M450 270 L620 270 M380 400 L480 490 M540 380 L680 330 M480 970 L620 1050" strokeDasharray="0 44" stroke="#9ccb8c" />
    </g>
    <circle transform={at("A")} cx="330" cy="840" r="31" fill="none" stroke="#a9cf9b" strokeWidth="5" strokeDasharray="34 6" />
    <g fill="none" stroke="#3333ff" strokeWidth="6" strokeDasharray="18 13">
      <path transform={at("A")} d="M15 936 L270 985" />
      <path transform={at("B")} d="M338 90 L350 150 M515 12 L580 8" />
    </g>
    <g fill="none" stroke="#666" strokeWidth="4">
      <path transform={at("A")} d="M105 425 V450 M135 425 V452 M540 95 L565 98 M545 50 L575 54 M740 180 V195 M770 197 V212" />
      <path transform={at("C")} d="M402 418 L385 447 M430 418 L412 450 M325 485 L357 482 M325 512 L357 516 M440 828 L426 858 M460 838 L444 864" />
    </g>

    <g fontFamily="'Noto Sans', sans-serif" fontSize="43.5" fontWeight="500" stroke="#fff" strokeOpacity=".7" strokeWidth="6" strokeLinejoin="round" paintOrder="stroke">
      {labels.map((label, i) => (
        <MapLabel key={i} label={label} />
      ))}
      <path id="antonius" d="M795 42 Q880 -4 960 -10 L1160 -20" transform={at("C")} fill="none" stroke="none" />
      <text fill={DARK} fontSize="41">
        <textPath href="#antonius">Sint-Antoniusberg</textPath>
      </text>
    </g>
    <text transform={at("C")} x="478" y="668" fontFamily="'Noto Sans', sans-serif" fontSize="78" fill="#8ecbe6">P</text>

    <Arrow q="A" x1={155} y1={29} x2={210} y2={34} />
    <Arrow q="A" x1={172} y1={344} x2={116} y2={341} />
    <Arrow q="A" x1={907} y1={330} x2={884} y2={376} />
    <Arrow q="A" x1={635} y1={1045} x2={620} y2={1105} />
    <Arrow q="B" x1={350} y1={338} x2={298} y2={327} />
    <Arrow q="B" x1={1155} y1={218} x2={1190} y2={246} />
    <Arrow q="B" x1={62} y1={985} x2={57} y2={1042} />
    <Arrow q="C" x1={707} y1={518} x2={714} y2={578} />
    <Arrow q="D" x1={484} y1={542} x2={532} y2={514} />
    <Arrow q="D" x1={694} y1={739} x2={642} y2={758} />

    <Cart q="A" x={722} y={558} />
    <Cart q="B" x={99} y={543} />
    <Cart q="B" x={27} y={641} />
    <Cart q="B" x={737} y={722} />
    <Cart q="C" x={1150} y={20} />
    <Cross q="B" x={1144} y={880} />
    <Cross q="B" x={190} y={1062} />
    <Cross q="C" x={780} y={82} />
    <Cross q="C" x={1081} y={600} />
    <Cross q="C" x={1068} y={1062} />
    <Cross q="D" x={909} y={437} />
    <Cross q="D" x={967} y={457} />
    <Book q="D" x={170} y={516} />
    <Book q="D" x={669} y={916} />
    <g transform={at("B")} fill="#734a08">
      <path d="M998 192 L1030 174 L1062 192 V198 H998Z M1004 202 h8 v18 h-8Z M1020 202 h8 v18 h-8Z M1034 202 h8 v18 h-8Z M1050 202 h8 v18 h-8Z M1000 222 h60 v4 h-60Z M997 227 h66 v4 h-66Z" />
      <path d="M280 226 L304 246 L290 268 L266 252Z" fill="none" stroke="#fff" strokeWidth="11" />
      <path d="M266 158 h4 v4 h18 v9 h-18 v6 l22 12 v6 h-50 v-6 l20 -12Z M244 199 h9 v18 h-9Z M258 199 h18 v18 h-18Z M281 199 h9 v18 h-9Z M238 219 h58 v9 h-58Z" />
    </g>
    <g transform={at("C")} fill="#734a08">
      <path fillRule="evenodd" d="M900 821 h67 v61 h-67Z M917 827 v22 h34 v-22Z M917 855 v22 h34 v-22Z M904 826 v6 h7 v-6Z M904 838 v6 h7 v-6Z M904 850 v6 h7 v-6Z M904 862 v6 h7 v-6Z M957 826 v6 h7 v-6Z M957 838 v6 h7 v-6Z M957 850 v6 h7 v-6Z M957 862 v6 h7 v-6Z" />
      <path d="M471 314 Q485 322 501 318 V344 Q496 362 482 360 Q468 354 471 338Z" fill="#e9d9c2" stroke="#734a08" strokeWidth="4" />
      <path d="M478 334 h6 M490 334 h6 M480 350 q6 -6 12 -2" fill="none" stroke="#734a08" strokeWidth="4" />
      <path fillRule="evenodd" d="M498 330 Q516 336 536 328 V356 Q534 376 517 379 Q500 374 498 356Z M506 340 h9 v6 h-9Z M521 340 h9 v6 h-9Z M506 354 q11 20 23 0Z" />
    </g>
    <rect transform={at("B")} x="339" y="15" width="29" height="27" fill="#7fcdf0" />
    <rect transform={at("B")} x="621" y="24" width="30" height="30" fill="#7fcdf0" />
    <rect transform={at("D")} x="60" y="4" width="30" height="30" fill="#0092da" />

    <g fill="#0000ff" fillOpacity=".7">
      {points.map(([q, x, y, r], i) => (
        <circle key={i} cx={x + OFFSET[q][0]} cy={y + OFFSET[q][1]} r={r} />
      ))}
    </g>
    <circle transform={at("D")} cx="24" cy="106" r="56" fill="#ff0000" fillOpacity=".7" />
    <Modebar />
    <g transform={at("D")}>
      <circle cx="1083" cy="975" r="57" fill="#fff" fillOpacity=".5" />
      <circle cx="1083" cy="975" r="34" fill="#333" />
      <path d="M1077 955 a7 7 0 1 1 14 0 a7 7 0 1 1 -14 0 M1072 968 h18 v22 h5 v7 h-24 v-7 h6 v-15 h-5Z" fill="#eee" />
    </g>
  </svg>
);

const Weather = () => (
  <svg viewBox="0 0 735 597" preserveAspectRatio="none" className="h-[199px] w-[245px]">
    <defs>
      <linearGradient id="sky" x1="0" y1="0" x2="1" y2="1">
        <stop offset="0" stopColor="#22719a" />
        <stop offset=".6" stopColor="#1a6896" />
        <stop offset="1" stopColor="#1b6189" />
      </linearGradient>
      <linearGradient id="sun" x1="0" y1=".25" x2="1" y2=".7">
        <stop offset="0" stopColor="#fff07e" />
        <stop offset=".42" stopColor="#ffde14" />
        <stop offset=".68" stopColor="#ffd218" />
        <stop offset="1" stopColor="#ff9f22" />
      </linearGradient>
      <linearGradient id="cloud" gradientUnits="userSpaceOnUse" x1="430" y1="270" x2="395" y2="475">
        <stop offset="0" stopColor="#ffa95c" />
        <stop offset=".55" stopColor="#ff984e" />
        <stop offset="1" stopColor="#ff5c50" />
      </linearGradient>
      <filter id="soft" x="-50%" y="-50%" width="200%" height="200%">
        <feGaussianBlur stdDeviation="32" />
      </filter>
      <clipPath id="disc">
        <path d="M106 345 C106 180 220 75 367 75 C500 78 635 205 635 345 C635 425 600 468 553 468 L457 468 Q400 510 345 510 Q310 510 275 487 L215 487 C150 480 110 420 106 345Z" />
      </clipPath>
    </defs>
    <rect width="735" height="597" fill="url(#sky)" />
    <g fill="#033c58" filter="url(#soft)">
      <path d="M190 480 L600 470 L640 240 L710 340 L690 500 L540 590 L330 590Z" fillOpacity=".85" />
      <ellipse cx="0" cy="385" rx="30" ry="90" fillOpacity=".7" />
    </g>
    <g clipPath="url(#disc)">
      <rect width="735" height="597" fill="url(#sun)" />
      <path d="M90 370 Q145 300 208 350 Q242 355 247 414 H338 Q338 328 405 324 Q430 324 450 330 Q470 275 525 273 Q600 278 606 355 L640 380 V600 H90Z" fill="url(#cloud)" />
      <path d="M208 350 Q242 355 247 414 H241 Q236 370 208 350Z" fill="#f98a28" fillOpacity=".7" />
      <path d="M0 465 H470 V597 H0Z" fill="#ff4658" />
    </g>
    <path d="M106 345 C106 180 220 75 367 75 C500 78 635 205 635 345 C635 425 600 468 553 468 L457 468 Q400 510 345 510 Q310 510 275 487 L215 487 C150 480 110 420 106 345Z" fill="none" stroke="#d8c070" strokeOpacity=".55" strokeWidth="3" />
  </svg>
);

const HoverLabel = () => (
  <div className="absolute top-[352px] left-[426px] h-[87px] w-[337px] border border-white bg-[#ff0000] pt-px pl-[4px] text-[20.8px] leading-[27.2px] whitespace-nowrap text-white">
    <svg viewBox="0 0 12 20" className="absolute top-[34px] -left-[11px] h-5 w-3">
      <path d="M12 0 L1 10 L12 20Z" fill="#ff0000" />
      <path d="M11 1 L1 10 L11 19" fill="none" stroke="#fff" strokeWidth="1" />
    </svg>
    <div><b>Location:</b> Taste (Naamsestraat 62)</div>
    <div><b>Noise level:</b> 51.52 dB(A)</div>
    <div><b>Temperature:</b> 21.3 °C</div>
  </div>
);

const MARKS = [1, 50, 100, 150, 200, 250, 300, 365];
const DAY = 221;
const percent = (day: number) => `${((day - 1) / 364) * 100}%`;

const DaySlider = () => (
  <div className="relative mt-[3px] ml-[40px] h-[48px] w-[930.5px]">
    <div className="h-[6.4px] rounded-full bg-[#e9e9e9]">
      <div className="h-full rounded-full bg-[#abe2fb]" style={{ width: percent(DAY) }} />
    </div>
    {MARKS.map((day) => (
      <div key={day} className="absolute top-[3.2px]" style={{ left: percent(day) }}>
        <div className={`absolute size-[12.8px] -translate-1/2 rounded-full border-[3.2px] bg-white ${day <= DAY ? "border-[#96dbfa]" : "border-[#e9e9e9]"}`} />
        <div className="absolute top-[14px] -translate-x-1/2 text-[19.2px] leading-[29px]">{day}</div>
      </div>
    ))}
    <div className="absolute top-[3.2px] size-[22.4px] -translate-1/2 rounded-full border-[3.2px] border-[#96dbfa] bg-white" style={{ left: percent(DAY) }} />
  </div>
);

const Radio = ({ label, checked }: { label: string; checked?: boolean }) => (
  <label className="flex h-[31.5px] gap-[4px] text-[24px] leading-[27px]">
    <span className="flex size-[20.8px] items-center justify-center rounded-full border-[1.6px] border-[#767676] bg-white">
      {checked && <span className="size-[12.4px] rounded-full bg-[#767676]" />}
    </span>
    <span className="-mt-[0.5px]">{label}</span>
  </label>
);

const Detail = ({ name, value }: { name: string; value: string }) => (
  <p>
    <b>{name}</b> {value}
  </p>
);

export default function App() {
  return (
    <main className="h-[1217px] w-[2563px] overflow-hidden bg-[#1a2849] font-['Liberation_Sans',Arial,sans-serif] text-white">
      <div className="ml-[2px] h-px bg-[#dfe1e6]" />
      <section className="pt-[23px] pl-[161.6px]">
        <h1 className="text-[51.2px] leading-[76.8px] font-bold">Noise map</h1>
        <div className="mt-[23.4px] flex flex-col gap-[32px] text-[28.8px] leading-[43.2px] whitespace-nowrap">
          <p>
            This map showcases various locations in Leuven where noise levels were measured. The blue circles represent the observed sound levels, with their size indicating the intensity of the
            <br />
            noise. The map differentiates between the average and maximal noise levels recorded each day.
          </p>
          <p>
            You can select a specific day using the slider, which automatically updates the weather icon to reflect the weather conditions in Leuven on that day. The weather icon indicates whether it
            <br />
            was rainy, partially cloudy, or sunny in Leuven.
          </p>
          <p>
            By clicking on a specific point on the map, you can view additional details such as the location name, the observed sound level, and the temperature in Leuven for the selected day.
          </p>
        </div>
      </section>
      <section className="mt-[31.8px] ml-[339px] flex">
        <div className="relative h-[720px] w-[786px]">
          <StreetMap />
          <HoverLabel />
        </div>
        <div className="ml-[48px] w-[1000px] pt-[42px]">
          <h2 className="text-[32px] leading-[48px]">Select a day:</h2>
          <DaySlider />
          <p className="mt-[7px] ml-[16px] text-[24px] leading-[36px]">09 August 2022</p>
          <h2 className="mt-[70px] text-[32px] leading-[48px]">Select between average and maximal noise level:</h2>
          <div className="ml-[8px]">
            <Radio label="Average noise level" checked />
            <Radio label="Maximal noise level" />
          </div>
          <h2 className="mt-[68.6px] text-[32px] leading-[48px]">Clicked Point:</h2>
          <div className="mt-[26.6px] flex">
            <div className="ml-[8px] flex w-[693px] flex-col gap-[32px] text-[28.8px] leading-[43.2px]">
              <Detail name="Location:" value="Taste (Naamsestraat 62)" />
              <Detail name="Noise Level:" value="51.52 dB(A)" />
              <Detail name="Temperature:" value="21.3 °C" />
            </div>
            <div className="mt-[12px]">
              <Weather />
            </div>
          </div>
        </div>
      </section>
    </main>
  );
}
